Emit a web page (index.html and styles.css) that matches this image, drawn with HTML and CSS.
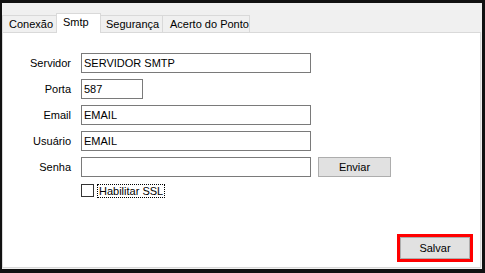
FILE: index.html
```html
<!DOCTYPE html>
<html>
<head>
  <title>Configurações</title>
  <link rel="stylesheet" href="styles.css">
</head>
<body>
  <div class="window">
    <div class="tabs">
      <div class="tab tab-conexao">Conexão</div>
      <div class="tab tab-smtp active">Smtp</div>
      <div class="tab tab-seguranca">Segurança</div>
      <div class="tab tab-acerto">Acerto do Ponto</div>
    </div>

    <div class="panel">
      <div class="row">
        <label class="field-label">Servidor</label>
        <input type="text" class="field field-wide" value="SERVIDOR SMTP">
      </div>
      <div class="row">
        <label class="field-label">Porta</label>
        <input type="text" class="field field-short" value="587">
      </div>
      <div class="row">
        <label class="field-label">Email</label>
        <input type="text" class="field field-wide" value="EMAIL">
      </div>
      <div class="row">
        <label class="field-label">Usuário</label>
        <input type="text" class="field field-wide" value="EMAIL">
      </div>
      <div class="row">
        <label class="field-label">Senha</label>
        <input type="password" class="field field-wide" value="">
        <button class="btn btn-enviar">Enviar</button>
      </div>
      <div class="row row-check">
        <input type="checkbox" class="check" id="ssl">
        <label class="check-label" for="ssl">Habilitar SSL</label>
      </div>

      <!-- Save button, highlighted in red -->
      <div class="actions">
        <span class="highlight">
          <button class="btn btn-salvar">Salvar</button>
        </span>
      </div>
    </div>
  </div>
</body>
</html>
```

FILE: styles.css
```css
body {
  margin: 0;
  background-color: #111111;
  font-family: "Liberation Sans", Arial, sans-serif;
  font-size: 11px;
  color: #000000;
}

.window {
  margin: 3px 3px 4px 2px;
  height: 266px;
  background-color: #f0f0f0;
  display: flex;
  flex-direction: column;
}

/* Tabs */
.tabs {
  display: flex;
  align-items: flex-end;
  height: 29px;
  flex-shrink: 0;
}

.tab {
  box-sizing: border-box;
  height: 17px;
  line-height: 17px;
  padding-left: 6px;
  border: 1px solid #d9d9d9;
  border-bottom: none;
  background-color: #f0f0f0;
  margin-right: -1px;
}

.tab.active {
  position: relative;
  z-index: 1;
  height: 20px;
  line-height: 17px;
  margin-bottom: -1px;
  background-color: #ffffff;
}

.tab-conexao { width: 55px; }
.tab-smtp { width: 45px; }
.tab-seguranca { width: 63px; padding-left: 5px; }
.tab-acerto { width: 88px; padding-left: 7px; }

/* Panel */
.panel {
  flex: 1;
  margin: 0 1px 1px 0;
  padding-top: 20px;
  background-color: #ffffff;
  border: 1px solid #d9d9d9;
  display: flex;
  flex-direction: column;
}

.row {
  display: flex;
  align-items: center;
  height: 20px;
  margin-bottom: 6px;
}

.field-label {
  width: 68px;
  margin-right: 10px;
  text-align: right;
}

.field {
  box-sizing: border-box;
  height: 20px;
  padding: 0 2px;
  margin: 0;
  border: 1px solid #7a7a7a;
  font-family: "Liberation Sans", Arial, sans-serif;
  font-size: 11px;
  color: #000000;
  outline: none;
}

.field-wide { width: 230px; }
.field-short { width: 62px; }

.btn {
  box-sizing: border-box;
  border: 1px solid #adadad;
  background-color: #e1e1e1;
  font-family: "Liberation Sans", Arial, sans-serif;
  font-size: 11px;
  color: #000000;
  padding: 0;
  margin: 0;
}

.btn-enviar {
  width: 73px;
  height: 20px;
  margin-left: 7px;
}

.row-check {
  padding-left: 78px;
  height: 15px;
}

.check {
  appearance: none;
  -webkit-appearance: none;
  box-sizing: border-box;
  width: 13px;
  height: 13px;
  margin: 0 3px 0 0;
  border: 1px solid #333333;
  background-color: #ffffff;
}

.check-label {
  border: 1px dotted #000000;
  padding: 0 1px;
  line-height: 12px;
}

.actions {
  margin-top: auto;
  display: flex;
  justify-content: flex-end;
  padding: 0 7px 5px 0;
}

.highlight {
  display: block;
  border: 3px solid #ff0000;
}

.btn-salvar {
  display: block;
  width: 70px;
  height: 22px;
}
```
